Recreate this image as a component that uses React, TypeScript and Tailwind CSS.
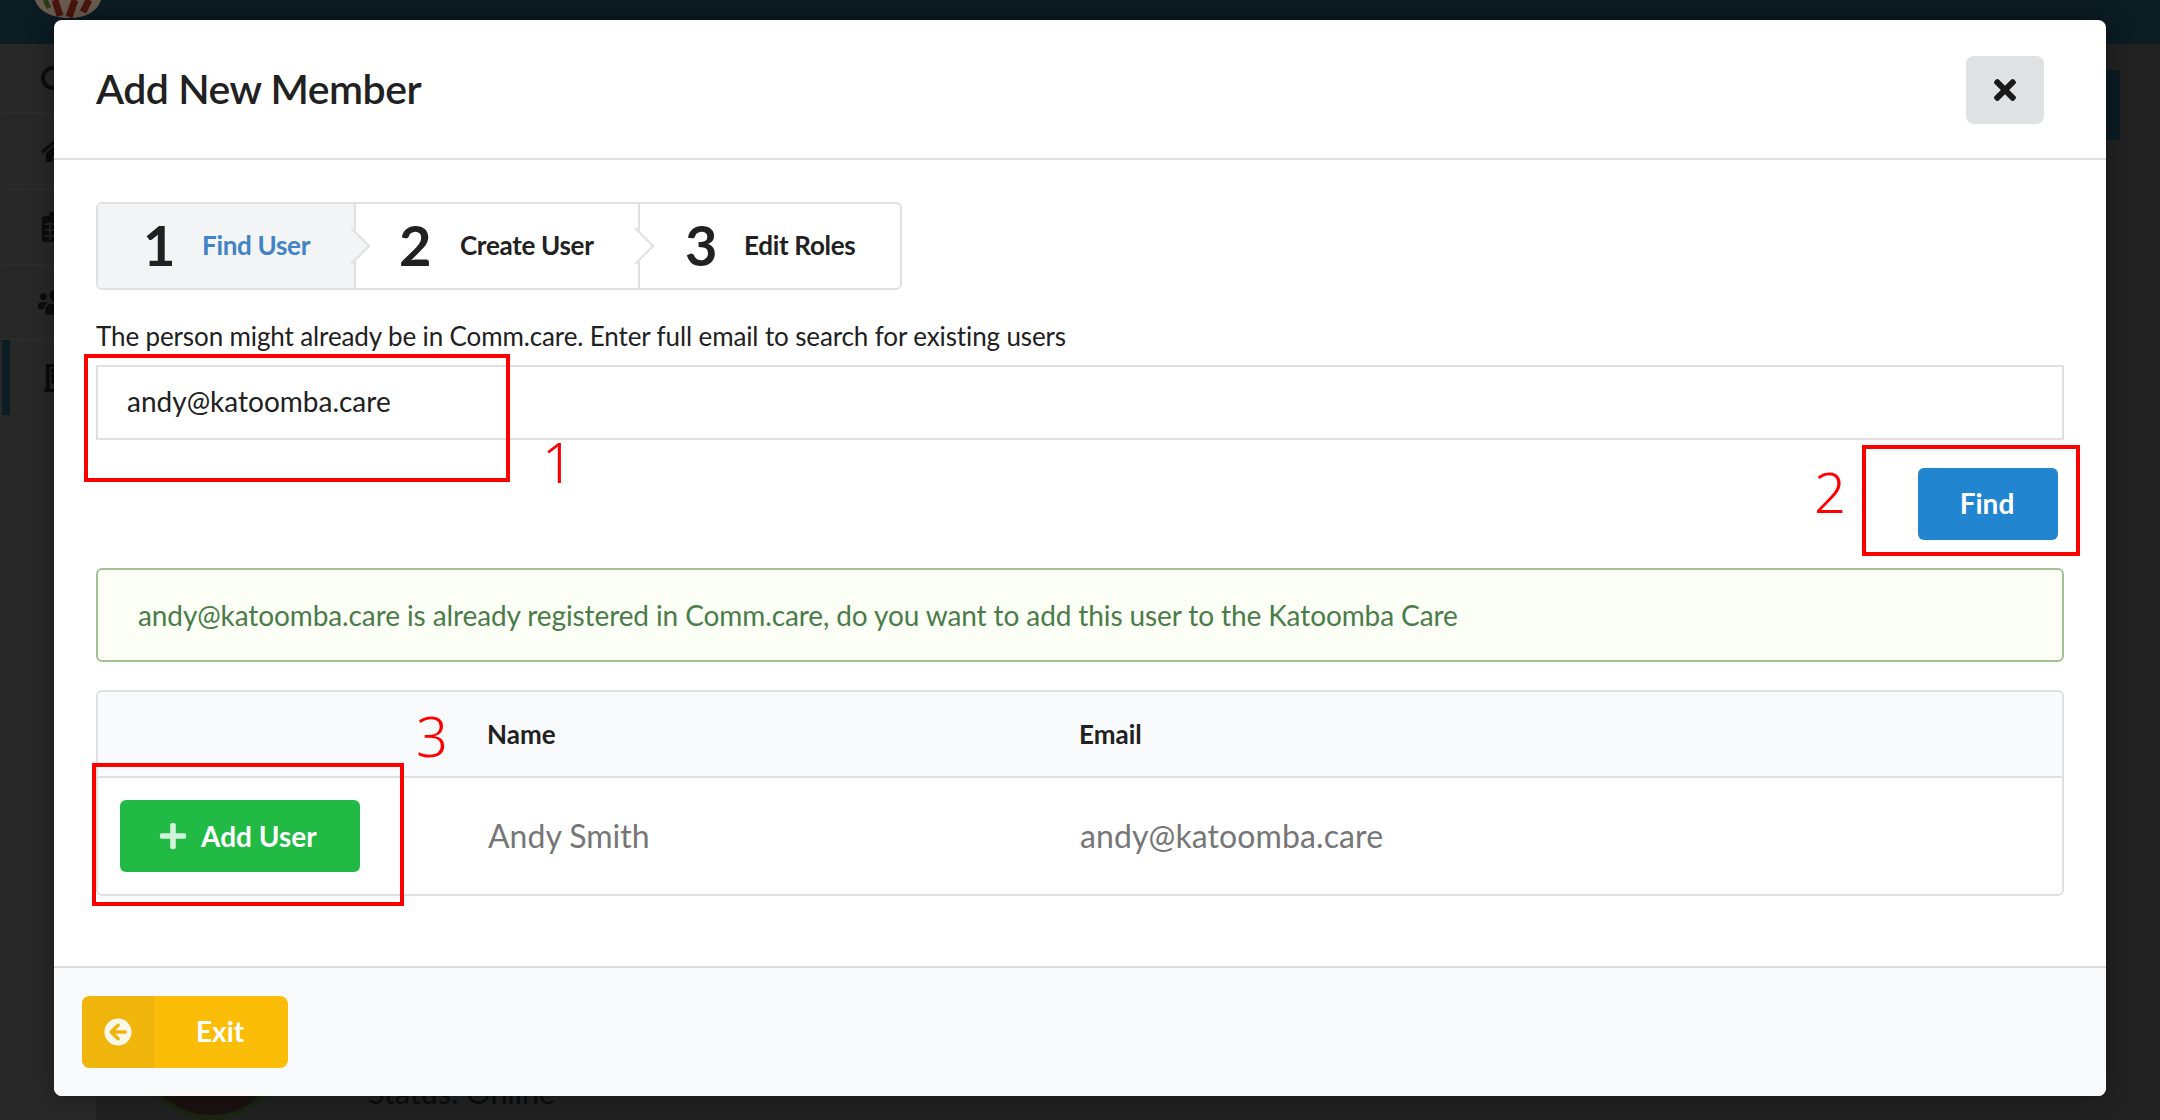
import React from 'react';
import { FaArrowCircleLeft, FaHome, FaPlus, FaRegBuilding, FaTimes, FaUsers } from 'react-icons/fa';

const steps = [
  { id: 1, title: 'Find User', width: 'w-[258px]', numberClass: 'ml-[45px]', labelClass: 'ml-[14px]', active: true },
  { id: 2, title: 'Create User', width: 'w-[284px]', numberClass: 'ml-[43px]', labelClass: 'ml-[16px]', active: false },
  { id: 3, title: 'Edit Roles', width: 'flex-1', numberClass: 'ml-[45px]', labelClass: 'ml-[14px]', active: false },
];

function CalendarIcon() {
  return (
    <svg width="28" height="30" viewBox="0 0 28 30">
      <rect x="8" y="0" width="6" height="8" rx="2" fill="#0c0c0c" />
      <rect x="1" y="4" width="26" height="26" rx="3" fill="#0c0c0c" />
      <path d="M4 12h20M4 18h20M4 24h20M9 10v18M16 10v18" stroke="#2a2a2a" strokeWidth="1.5" />
    </svg>
  );
}

function TopAvatar() {
  return (
    <svg width="70" height="20" viewBox="0 0 70 20">
      <path d="M0 0h66C62 12 50 18 34 18S4 12 0 0z" fill="#6a5c4e" />
      <path d="M20 0l5 16M40 0l-6 17M54 0l-6 12" stroke="#4a1410" strokeWidth="7" />
      <path d="M10 0l4 8" stroke="#2c3a1c" strokeWidth="5" />
    </svg>
  );
}

function Backdrop() {
  return (
    <div className="flex h-[1120px] w-[2160px] flex-col overflow-hidden bg-[#222222]">
      <div className="h-[44px] shrink-0 bg-[#0b1c22] pl-[35px]">
        <TopAvatar />
      </div>
      <div className="flex flex-1">
        <div className="flex w-[96px] shrink-0 flex-col bg-[#282828] pl-[2px] text-[#0c0c0c]">
          <div className="flex h-[69px] items-center border-b border-[#2e2e2e] pl-[39px]">
            <div className="h-[24px] w-[24px] rounded-full border-[4px] border-[#0c0c0c]"></div>
          </div>
          <div className="flex h-[77px] items-center border-b border-[#2e2e2e] pl-[39px]"><FaHome size={28} /></div>
          <div className="flex h-[75px] items-center border-b border-[#2e2e2e] pl-[39px]"><CalendarIcon /></div>
          <div className="flex h-[75px] items-center border-b border-[#2e2e2e] pl-[36px]"><FaUsers size={36} /></div>
          <div className="flex h-[75px] items-center border-l-[8px] border-[#0b1c22] pl-[33px]">
            <FaRegBuilding size={28} stroke="currentColor" strokeWidth={24} />
          </div>
        </div>
        <div className="flex flex-1 items-end pl-[40px]">
          <div className="h-[150px] w-[150px] shrink-0 rounded-full border-[5px] border-[#1c2414] bg-[#1a1210]"></div>
          <div className="mb-[4px] ml-[82px] text-[30.5px] text-[#0c0c0c]">Status: Online</div>
        </div>
        <div className="w-[54px] shrink-0 pt-[26px]">
          <div className="h-[70px] w-[14px] bg-[#0b1c22]"></div>
        </div>
      </div>
    </div>
  );
}

function RedBox({ className }: { className: string }) {
  return <div className={`pointer-events-none absolute border-4 border-[#ff0000] ${className}`}></div>;
}

function Note({ className, children }: { className: string; children: React.ReactNode }) {
  return <div className={`absolute font-['Noto_Sans',sans-serif] text-[56px] leading-none font-[350] text-[#ff0000] ${className}`}>{children}</div>;
}

export default function App() {
  return (
    <div className="relative h-[1120px] w-[2160px] overflow-hidden font-['Lato',sans-serif]">
      <Backdrop />
      <div className="absolute top-[20px] left-[54px] flex h-[1076px] w-[2052px] flex-col overflow-hidden rounded-[8px] bg-white text-[#212121] shadow-[0_0_24px_rgba(0,0,0,0.35)]">
        <div className="flex h-[140px] shrink-0 items-center justify-between border-b-2 border-[#e0e0e0] pr-[62px] pl-[42px]">
          <h1 className="text-[41px] font-semibold tracking-[-0.5px]">Add New Member</h1>
          <div className="mt-[2px] flex h-[68px] w-[78px] items-center justify-center rounded-[8px] bg-[#e0e1e2] text-[#1a1a1a]">
            <FaTimes size={32} />
          </div>
        </div>

        <div className="flex flex-1 flex-col px-[42px] pt-[42px]">
          <div className="flex h-[88px] w-[806px] rounded-[6px] border-2 border-[#e0e0e0]">
            {steps.map((step) => (
              <div key={step.id} className={`relative flex h-full items-center pb-[2px] ${step.width} ${step.id < 3 ? 'border-r-2 border-[#e0e0e0]' : ''} ${step.active ? 'rounded-l-[4px] bg-[#f3f4f5]' : ''}`}>
                <span className={`w-[45px] text-[56px] leading-none font-bold ${step.numberClass}`}>{step.id}</span>
                <span className={`text-[26px] font-bold tracking-[-0.3px] ${step.labelClass} ${step.active ? 'text-[#4183c4]' : 'text-[#212121]'}`}>{step.title}</span>
                {step.id < 3 && (
                  <div className={`absolute top-1/2 -right-[11px] h-[26px] w-[26px] -translate-y-1/2 rotate-45 border-t-2 border-r-2 border-[#e0e0e0] ${step.active ? 'bg-[#f3f4f5]' : 'bg-white'}`}></div>
                )}
              </div>
            ))}
          </div>

          <p className="mt-[31px] text-[26px] leading-[31px] tracking-[-0.12px]">The person might already be in Comm.care. Enter full email to search for existing users</p>
          <div className="mt-[13px] flex h-[75px] items-center border-2 border-[#e0e0e0] pb-[3px] pl-[29px] text-[28px]">andy@katoomba.care</div>

          <div className="mt-[28px] flex justify-end pr-[6px]">
            <div className="flex h-[72px] w-[140px] items-center justify-center rounded-[6px] bg-[#2185d0] pr-[2px] pb-[2px] text-[28px] font-bold text-white">Find</div>
          </div>

          <div className="mt-[28px] flex h-[94px] items-center rounded-[6px] border-2 border-[#a3c293] bg-[#fcfff5] pl-[40px] text-[28px] tracking-[-0.1px] text-[#4a7c4a]">
            andy@katoomba.care is already registered in Comm.care, do you want to add this user to the Katoomba Care
          </div>

          <div className="mt-[28px] rounded-[6px] border-2 border-[#e0e0e0]">
            <div className="flex h-[86px] items-center rounded-t-[4px] border-b-2 border-[#e0e0e0] bg-[#f9fafb] text-[26px] font-bold">
              <div className="w-[389px] shrink-0"></div>
              <div className="w-[592px] shrink-0">Name</div>
              <div>Email</div>
            </div>
            <div className="flex h-[116px] items-center text-[32px] text-[#767676]">
              <div className="w-[390px] shrink-0 pl-[22px]">
                <div className="flex h-[72px] w-[240px] items-center gap-[13px] rounded-[6px] bg-[#21ba45] pl-[38px] text-[28px] font-bold text-white">
                  <FaPlus size={30} className="opacity-80" />
                  Add User
                </div>
              </div>
              <div className="w-[592px] shrink-0">Andy Smith</div>
              <div className="tracking-[0.1px]">andy@katoomba.care</div>
            </div>
          </div>
        </div>

        <div className="flex h-[130px] shrink-0 items-center border-t-2 border-[#dcdcdc] bg-[#f9fafb] pl-[28px]">
          <div className="flex h-[72px] w-[206px] overflow-hidden rounded-[8px] bg-[#fbbd08] text-[28px] font-bold text-white">
            <div className="flex w-[72px] items-center justify-center bg-[#f0b50c]">
              <FaArrowCircleLeft size={28} className="opacity-90" />
            </div>
            <div className="flex flex-1 items-center pb-[2px] pl-[42px]">Exit</div>
          </div>
        </div>

        <RedBox className="top-[334px] left-[30px] h-[128px] w-[426px]" />
        <RedBox className="top-[425px] left-[1808px] h-[111px] w-[218px]" />
        <RedBox className="top-[743px] left-[38px] h-[143px] w-[312px]" />
        <Note className="top-[413px] left-[488px]">1</Note>
        <Note className="top-[443px] left-[1760px]">2</Note>
        <Note className="top-[687px] left-[362px]">3</Note>
      </div>
    </div>
  );
}
